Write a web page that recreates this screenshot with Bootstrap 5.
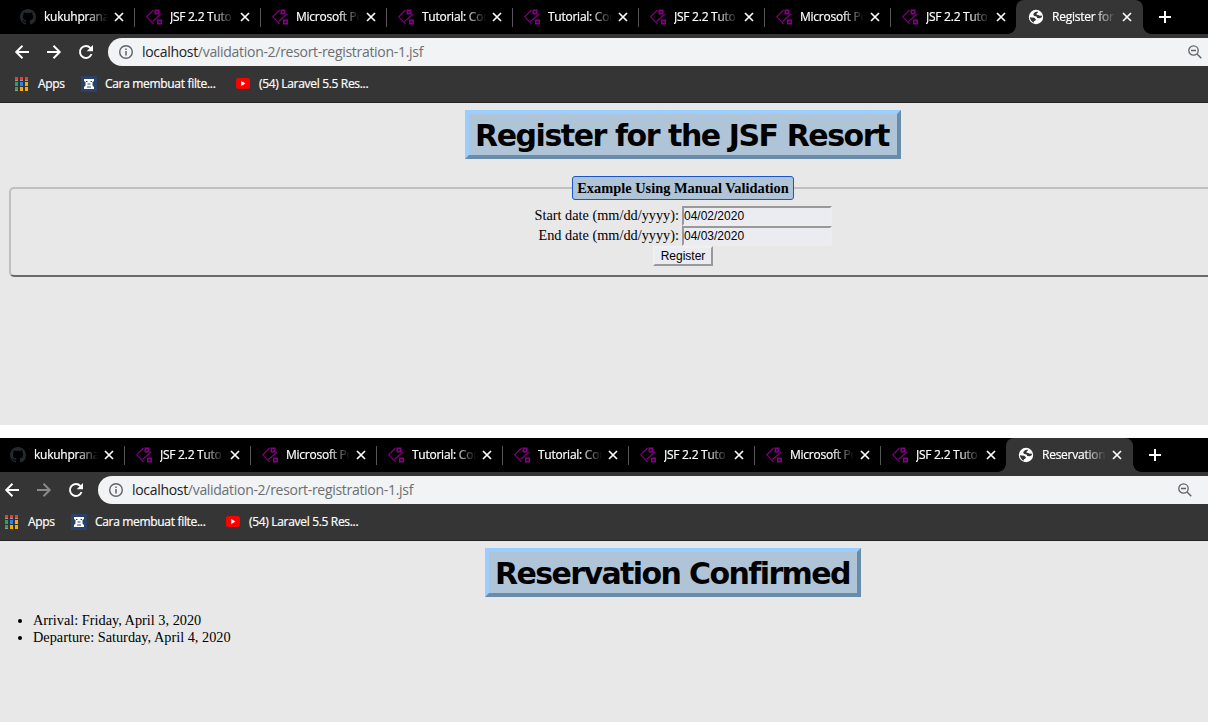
<!DOCTYPE html>
<html lang="en">
<head>
<meta charset="utf-8">
<meta name="viewport" content="width=device-width, initial-scale=1">
<title>JSF Resort</title>
<link href="https://cdn.jsdelivr.net/npm/bootstrap@5.3.0/dist/css/bootstrap.min.css" rel="stylesheet">
<style>
body{width:1208px;height:722px;background:#fff;overflow:hidden;font-family:"Open Sans","Noto Sans",sans-serif;font-size:12px;line-height:16px;color:#000}
.win{overflow:hidden;width:1208px;background:#e8e8e8}
.win-a{height:425px}
.win-b{height:284px;margin-top:13px}
.frame{width:1366px}
.win-b .frame{margin-left:-10px}
.strip{height:34px;background:#000;padding-left:8px;color:#fff}
.tab{width:126px;height:34px;padding-left:12px;position:relative;flex:none}
.tab::after{content:"";position:absolute;right:-1px;top:8px;width:1px;height:19px;background:#555}
.tab.last::after{display:none}
.tab .name{width:64px;margin-left:8px;overflow:hidden;white-space:nowrap;letter-spacing:-.25px;-webkit-text-stroke:.2px;-webkit-mask-image:linear-gradient(90deg,#000 66%,transparent);mask-image:linear-gradient(90deg,#000 66%,transparent)}
.tab .cls{margin-left:5px}
.tab.on{width:127px;background:#353535;border-radius:8px 8px 0 0}
.tab.on::before,.tab.on::after{content:"";display:block;position:absolute;top:auto;bottom:0;width:8px;height:8px}
.tab.on::before{left:-8px;background:radial-gradient(circle at 0 0,transparent 7.5px,#353535 8px)}
.tab.on::after{right:-8px;background:radial-gradient(circle at 100% 0,transparent 7.5px,#353535 8px)}
.bar{height:32px;background:#353535;padding:4px 0 0 14px;color:#fff}
.bar>svg{margin-right:16px}
.dim{color:#8a8a8a}
.omni{height:28px;background:#f1f3f4;border-radius:14px 0 0 14px;padding-left:10px;width:1260px;margin-left:-2px;color:#5f6368}
.url{font-size:14px;margin-left:8px;width:1038px;color:#6b6f73;letter-spacing:-.3px;white-space:nowrap}
.url b{font-weight:400;color:#202124}
.marks{height:37px;background:#353535;border-bottom:1px solid #222;color:#fff;padding:0 0 1px 15px}
.marks span{white-space:nowrap;letter-spacing:-.32px;padding-top:1px;-webkit-text-stroke:.2px}
.t-ap{width:43px;margin-left:10px}
.t-cm{width:131px;margin-left:8px}
.t-yt{margin-left:9px}
.doc{font-family:"Liberation Serif",serif;font-size:14.3px;line-height:17px;padding:7px 9px 0}
.title{font:bold 30px/37px "DejaVu Sans",sans-serif;height:49px;width:436px;margin:0 auto;border:4px solid;border-color:#99ceff #6a8cab #6a8cab #99ceff;background:#b0c4d8;padding:3px 0 0 6px;white-space:nowrap;letter-spacing:-1.45px}
.win-b .title{width:376px;letter-spacing:-1.6px}
.box{height:101px;margin-top:17px;border:2px solid;border-color:#c0c0c0 #707070 #6a6a6a #c0c0c0;border-radius:5px;padding:0}
.box legend{float:none;width:222px;height:24px;margin:0 auto 6px;padding:0;border:1px solid #1c55c4;border-radius:3px;background:#b0c4d8;font-size:14.4px;line-height:22px;font-weight:bold;text-align:center}
.line{height:20px}
.line label{width:145px;text-align:right;margin-right:3px;white-space:nowrap;padding-bottom:1px}
.line input{width:150px;height:20px;border:2px solid;border-color:#999 #ededf0 #ededf0 #999;background:#ebebf2;padding:0;font:12px "Liberation Sans",sans-serif;color:#000;border-radius:0}
.go{display:block;margin:0 auto;width:60px;height:20px;border:2px solid;border-color:#f0f0f0 #999 #999 #f0f0f0;background:#ebebf2;font:12px/15px "Liberation Sans",sans-serif;padding:0;color:#000}
.res{margin:15px 0 0;padding-left:34px}
</style>
</head>
<body>
<svg width="0" height="0" class="position-absolute">
<symbol id="gh" viewBox="0 0 16 16"><path fill="#24292e" d="M8 0C3.58 0 0 3.58 0 8c0 3.54 2.29 6.53 5.47 7.59.4.07.55-.17.55-.38 0-.19-.01-.82-.01-1.49-2.01.37-2.53-.49-2.69-.94-.09-.23-.48-.94-.82-1.13-.28-.15-.68-.52-.01-.53.63-.01 1.08.58 1.23.82.72 1.21 1.87.87 2.33.66.07-.52.28-.87.51-1.07-1.78-.2-3.64-.89-3.64-3.95 0-.87.31-1.59.82-2.15-.08-.2-.36-1.02.08-2.12 0 0 .67-.21 2.2.82.64-.18 1.32-.27 2-.27s1.36.09 2 .27c1.53-1.04 2.2-.82 2.2-.82.44 1.1.16 1.92.08 2.12.51.56.82 1.27.82 2.15 0 3.07-1.87 3.75-3.65 3.95.29.25.54.73.54 1.48 0 1.07-.01 1.93-.01 2.2 0 .21.15.46.55.38A8.01 8.01 0 0 0 16 8c0-4.42-3.58-8-8-8"/></symbol>
<symbol id="ch" viewBox="0 0 16 16"><g fill="none" stroke="#850085"><path d="M7.500 1L.7 7.800l6.800 7M15 5L6.500 12.500" stroke-width="1.100"/><path d="M9.300 1.300h3.400v3.400H9.300zM11.800 11.300h3.400v3.400h-3.400z" stroke-width="1.600"/></g></symbol>
<symbol id="gl" viewBox="0 0 16 16"><circle cx="8" cy="8" r="7.200" fill="#fff"/><path fill="#353535" d="M9.500 2.400L7 3.200 5.200 5l.6 1.800 2.700.6.800 1.600 2.700.3 2-1.300-.4-1.500-1.800.3-1.600-.9-1.700-.2.2-1.300 1.300-.8zM1.900 8.300l4.300.4 1.800 1.600-.8 1.500-1.300.4-.2 1.500C3.600 12.800 2.200 10.700 1.900 8.300z"/></symbol>
<symbol id="x" viewBox="0 0 12 12"><path d="M2 2l8 8M10 2l-8 8" stroke="#fff" stroke-width="1.700"/></symbol>
<symbol id="plus" viewBox="0 0 12 12"><path d="M0 6h12M6 0v12" stroke="#fff" stroke-width="2"/></symbol>
<symbol id="bk" viewBox="0 0 16 16"><path d="M15 8H2.500M8.500 1.700L2.200 8l6.300 6.300" fill="none" stroke="currentColor" stroke-width="1.900"/></symbol>
<symbol id="fw" viewBox="0 0 16 16"><path d="M1 8h12.500M7.500 1.700L13.800 8l-6.300 6.300" fill="none" stroke="currentColor" stroke-width="1.900"/></symbol>
<symbol id="rl" viewBox="0 0 16 16"><path d="M13.600 10A6 6 0 1 1 12.500 4" fill="none" stroke="#fff" stroke-width="1.900"/><path d="M15 1v6.300H8.700z" fill="#fff"/></symbol>
<symbol id="inf" viewBox="0 0 16 16"><circle cx="8" cy="8" r="6.300" fill="none" stroke="currentColor" stroke-width="1.400"/><path d="M8 7v4.500M8 4.500V6" stroke="currentColor" stroke-width="1.500"/></symbol>
<symbol id="mg" viewBox="0 0 14 14"><circle cx="5.500" cy="5.500" r="4.700" fill="none" stroke="currentColor" stroke-width="1.300"/><path d="M3 5.500h5M9 9l4.300 4.300" stroke="currentColor" stroke-width="1.400"/></symbol>
<symbol id="ap" viewBox="0 0 13 14"><path fill="#f33a30" d="M0 0h3v3H0zM5 0h3v3H5zM10 0h3v3h-3z"/><path fill="#999" d="M0 3h3v1H0zM5 3h3v1H5zM10 3h3v1h-3zM0 13h3v1H0z"/><path fill="#2da05a" d="M0 5h3v4H0zM0 10h3v3H0z"/><path fill="#2684f5" d="M5 5h3v4H5z"/><path fill="#f9ab00" d="M10 5h3v4h-3zM5 10h3v4H5zM10 10h3v4h-3z"/></symbol>
<symbol id="cm" viewBox="0 0 16 16"><path fill="#2b4268" d="M0 0h16v16H0z"/><path fill="#fff" d="M3 3h10v2l-1.500 1v3.500L13 11v2H3v-2l1.500-1.500V6L3 5z"/><path d="M5 5.500h1.500M9.500 5.500H11M6.500 8h3M6 11h4" stroke="#2b4268"/></symbol>
<symbol id="yt" viewBox="0 0 14 11"><rect width="14" height="11" rx="2.500" fill="#f00"/><path fill="#fff" d="M5.200 3v5l4.300-2.500z"/></symbol>
</svg>

<section class="win win-a"><div class="frame">
<div class="strip d-flex">
<div class="tab d-flex align-items-center"><svg width="16" height="16"><use href="#gh"/></svg><span class="name">kukuhprana</span><svg class="cls" width="12" height="12"><use href="#x"/></svg></div>
<div class="tab d-flex align-items-center"><svg width="16" height="16"><use href="#ch"/></svg><span class="name">JSF 2.2 Tuto</span><svg class="cls" width="12" height="12"><use href="#x"/></svg></div>
<div class="tab d-flex align-items-center"><svg width="16" height="16"><use href="#ch"/></svg><span class="name">Microsoft Po</span><svg class="cls" width="12" height="12"><use href="#x"/></svg></div>
<div class="tab d-flex align-items-center"><svg width="16" height="16"><use href="#ch"/></svg><span class="name">Tutorial: Con</span><svg class="cls" width="12" height="12"><use href="#x"/></svg></div>
<div class="tab d-flex align-items-center"><svg width="16" height="16"><use href="#ch"/></svg><span class="name">Tutorial: Con</span><svg class="cls" width="12" height="12"><use href="#x"/></svg></div>
<div class="tab d-flex align-items-center"><svg width="16" height="16"><use href="#ch"/></svg><span class="name">JSF 2.2 Tuto</span><svg class="cls" width="12" height="12"><use href="#x"/></svg></div>
<div class="tab d-flex align-items-center"><svg width="16" height="16"><use href="#ch"/></svg><span class="name">Microsoft Po</span><svg class="cls" width="12" height="12"><use href="#x"/></svg></div>
<div class="tab last d-flex align-items-center"><svg width="16" height="16"><use href="#ch"/></svg><span class="name">JSF 2.2 Tuto</span><svg class="cls" width="12" height="12"><use href="#x"/></svg></div>
<div class="tab on d-flex align-items-center"><svg width="16" height="16"><use href="#gl"/></svg><span class="name">Register for</span><svg class="cls" width="12" height="12"><use href="#x"/></svg></div>
<svg class="align-self-center ms-3" width="12" height="12"><use href="#plus"/></svg>
</div>
<div class="bar d-flex align-items-center"><svg width="16" height="16"><use href="#bk"/></svg><svg width="16" height="16"><use href="#fw"/></svg><svg width="16" height="16"><use href="#rl"/></svg>
<div class="omni d-flex align-items-center"><svg width="16" height="16"><use href="#inf"/></svg><span class="url"><b>localhost</b>/validation-2/resort-registration-1.jsf</span><svg class="ms-2" width="14" height="14"><use href="#mg"/></svg></div></div>
<div class="marks d-flex align-items-center"><svg width="13" height="14"><use href="#ap"/></svg><span class="t-ap">Apps</span><svg width="16" height="16"><use href="#cm"/></svg><span class="t-cm">Cara membuat filte...</span><svg width="14" height="11"><use href="#yt"/></svg><span class="t-yt">(54) Laravel 5.5 Res...</span></div>
<main class="doc"><h1 class="title">Register for the JSF Resort</h1>
<fieldset class="box"><legend>Example Using Manual Validation</legend>
<div class="line d-flex justify-content-center align-items-center"><label for="s">Start date (mm/dd/yyyy):</label><input id="s" value="04/02/2020"></div>
<div class="line d-flex justify-content-center align-items-center"><label for="e">End date (mm/dd/yyyy):</label><input id="e" value="04/03/2020"></div>
<button class="go" type="button">Register</button></fieldset></main>
</div></section>

<section class="win win-b"><div class="frame">
<div class="strip d-flex">
<div class="tab d-flex align-items-center"><svg width="16" height="16"><use href="#gh"/></svg><span class="name">kukuhprana</span><svg class="cls" width="12" height="12"><use href="#x"/></svg></div>
<div class="tab d-flex align-items-center"><svg width="16" height="16"><use href="#ch"/></svg><span class="name">JSF 2.2 Tuto</span><svg class="cls" width="12" height="12"><use href="#x"/></svg></div>
<div class="tab d-flex align-items-center"><svg width="16" height="16"><use href="#ch"/></svg><span class="name">Microsoft Po</span><svg class="cls" width="12" height="12"><use href="#x"/></svg></div>
<div class="tab d-flex align-items-center"><svg width="16" height="16"><use href="#ch"/></svg><span class="name">Tutorial: Con</span><svg class="cls" width="12" height="12"><use href="#x"/></svg></div>
<div class="tab d-flex align-items-center"><svg width="16" height="16"><use href="#ch"/></svg><span class="name">Tutorial: Con</span><svg class="cls" width="12" height="12"><use href="#x"/></svg></div>
<div class="tab d-flex align-items-center"><svg width="16" height="16"><use href="#ch"/></svg><span class="name">JSF 2.2 Tuto</span><svg class="cls" width="12" height="12"><use href="#x"/></svg></div>
<div class="tab d-flex align-items-center"><svg width="16" height="16"><use href="#ch"/></svg><span class="name">Microsoft Po</span><svg class="cls" width="12" height="12"><use href="#x"/></svg></div>
<div class="tab last d-flex align-items-center"><svg width="16" height="16"><use href="#ch"/></svg><span class="name">JSF 2.2 Tuto</span><svg class="cls" width="12" height="12"><use href="#x"/></svg></div>
<div class="tab on d-flex align-items-center"><svg width="16" height="16"><use href="#gl"/></svg><span class="name">Reservation</span><svg class="cls" width="12" height="12"><use href="#x"/></svg></div>
<svg class="align-self-center ms-3" width="12" height="12"><use href="#plus"/></svg>
</div>
<div class="bar d-flex align-items-center"><svg width="16" height="16"><use href="#bk"/></svg><svg class="dim" width="16" height="16"><use href="#fw"/></svg><svg width="16" height="16"><use href="#rl"/></svg>
<div class="omni d-flex align-items-center"><svg width="16" height="16"><use href="#inf"/></svg><span class="url"><b>localhost</b>/validation-2/resort-registration-1.jsf</span><svg class="ms-2" width="14" height="14"><use href="#mg"/></svg></div></div>
<div class="marks d-flex align-items-center"><svg width="13" height="14"><use href="#ap"/></svg><span class="t-ap">Apps</span><svg width="16" height="16"><use href="#cm"/></svg><span class="t-cm">Cara membuat filte...</span><svg width="14" height="11"><use href="#yt"/></svg><span class="t-yt">(54) Laravel 5.5 Res...</span></div>
<main class="doc"><h1 class="title">Reservation Confirmed</h1>
<ul class="res"><li>Arrival: Friday, April 3, 2020</li><li>Departure: Saturday, April 4, 2020</li></ul></main>
</div></section>
<script src="https://cdn.jsdelivr.net/npm/bootstrap@5.3.0/dist/js/bootstrap.bundle.min.js"></script>
</body>
</html>
